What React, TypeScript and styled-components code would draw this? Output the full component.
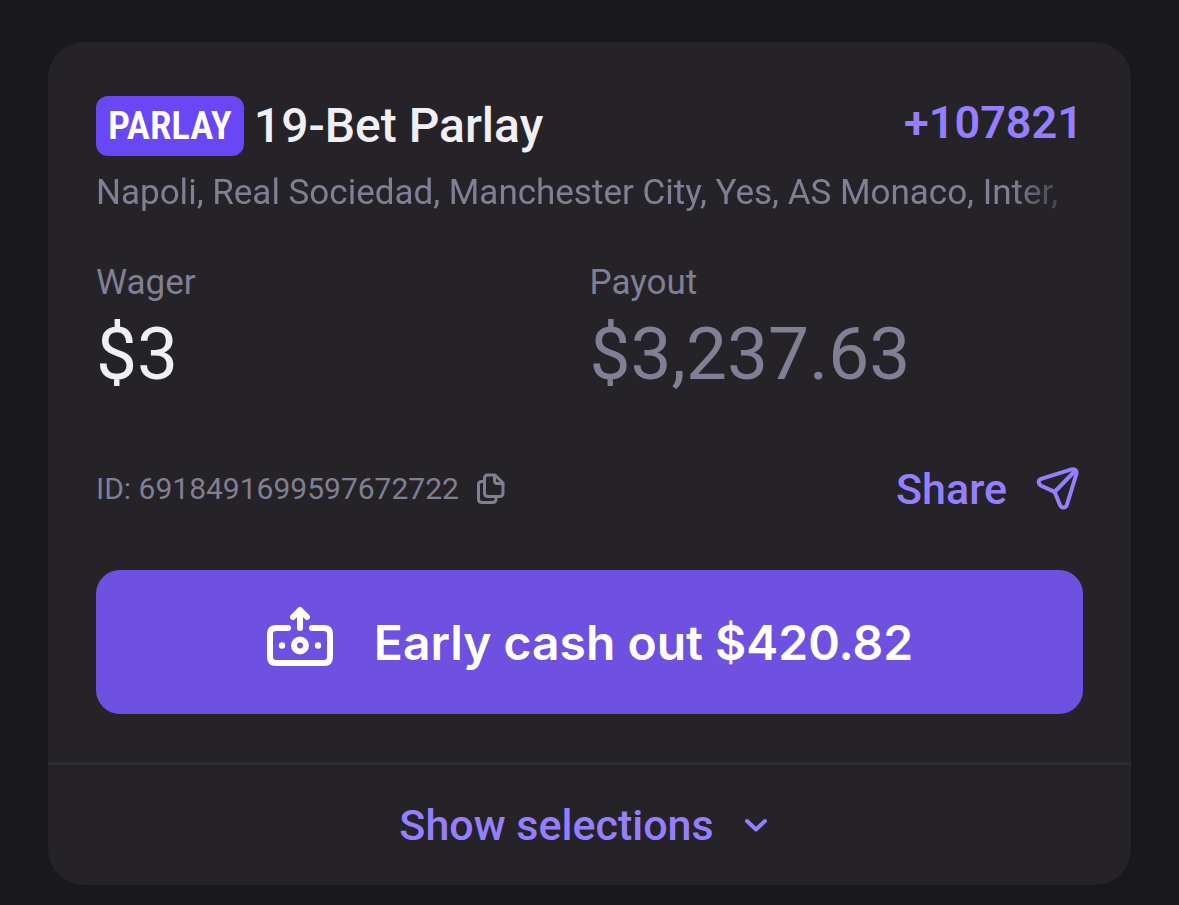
import React from "react";
import styled, { createGlobalStyle } from "styled-components";

const color = {
  page: "#19191b",
  card: "#252328",
  line: "#2e2d32",
  text: "#f0eff4",
  muted: "#817f93",
  accent: "#957fff",
  badge: "#6947f3",
  button: "#6e51e1",
};

const GlobalStyle = createGlobalStyle`
  * { box-sizing: border-box; }
  body {
    margin: 0;
    background: ${color.page};
    font-family: Roboto, "Liberation Sans", sans-serif;
  }
  button { font: inherit; cursor: pointer; }
`;

const Page = styled.main`
  padding: 42px 48px 20px;
`;

const Card = styled.article`
  border-radius: 36px;
  background: ${color.card};
  overflow: hidden;
`;

const Body = styled.div`
  padding: 54px 48px 48px;
`;

const Header = styled.header`
  display: flex;
  justify-content: space-between;
  align-items: flex-start;
`;

const Heading = styled.div`
  display: flex;
  align-items: center;
  gap: 10px;
`;

const Badge = styled.span`
  padding: 0 12px;
  border-radius: 12px;
  background: ${color.badge};
  color: #fff;
  font: 600 39px/60px "Roboto Condensed", "Open Sans Condensed", "Noto Sans Condensed", "Arial Narrow", Roboto, sans-serif;
`;

const Title = styled.h1`
  margin: 0;
  color: ${color.text};
  font-size: 48px;
  font-weight: 500;
  line-height: 60px;
`;

const Odds = styled.span`
  color: ${color.accent};
  font-size: 45px;
  font-weight: 600;
  line-height: 54px;
`;

const Teams = styled.p`
  margin: 12px 0 0;
  color: ${color.muted};
  font-size: 35px;
  line-height: 50px;
  white-space: nowrap;
  overflow: hidden;
  mask-image: linear-gradient(to right, #000 calc(100% - 72px), transparent);
`;

const Amounts = styled.dl`
  display: grid;
  grid-template-columns: 1fr 1fr;
  margin: 40px 0 0;
`;

const Label = styled.dt`
  color: ${color.muted};
  font-size: 35px;
  line-height: 50px;
`;

const Amount = styled.dd<{ $muted?: boolean }>`
  margin: 0;
  color: ${(p) => (p.$muted ? color.muted : color.text)};
  font-size: 73px;
  line-height: 92px;
`;

const Meta = styled.div`
  display: flex;
  justify-content: space-between;
  align-items: center;
  margin-top: 59px;
`;

const BetId = styled.div`
  display: flex;
  align-items: center;
  gap: 17px;
  color: ${color.muted};
  font-size: 30px;
  line-height: 36px;
`;

const TextButton = styled.button<{ $gap: number }>`
  display: flex;
  align-items: center;
  justify-content: center;
  gap: ${(p) => p.$gap}px;
  padding: 0;
  border: 0;
  background: none;
  color: ${color.accent};
  && {
    font-size: 43px;
    font-weight: 500;
    line-height: 60px;
  }
`;

const IconButton = styled.button`
  display: flex;
  padding: 0;
  border: 0;
  background: none;
  color: inherit;
`;

const CashOut = styled.button`
  display: flex;
  align-items: center;
  justify-content: center;
  gap: 40px;
  width: 100%;
  height: 144px;
  margin-top: 51px;
  border: 0;
  border-radius: 24px;
  background: ${color.button};
  color: #fff;
  && {
    font-family: Inter, Roboto, sans-serif;
    font-size: 48px;
    font-weight: 600;
  }
`;

const Footer = styled.footer`
  border-top: 3px solid ${color.line};
  padding: 30px 48px;
  display: flex;
  justify-content: center;
`;

const CopyIcon = () => (
  <svg width="30" height="32" viewBox="0 0 30 32" fill="none" stroke="currentColor" strokeWidth="3" strokeLinejoin="round" strokeLinecap="round" aria-hidden="true">
    <path d="M12 2H19L27 10V20Q27 23.500 23.500 23.500H12Q8.500 23.500 8.500 20V5.500Q8.500 2 12 2Z" />
    <path d="M18.500 2.500V7.500Q18.500 10.500 21.500 10.500H26.500" />
    <path d="M8 8.500H5.500Q2.500 8.500 2.500 11.500V26Q2.500 29.500 6 29.500H16.500Q20 29.500 20 26V24" />
  </svg>
);

const SendIcon = () => (
  <svg width="48" height="48" viewBox="0 0 48 48" fill="none" stroke="currentColor" strokeWidth="4" strokeLinejoin="round" strokeLinecap="round" aria-hidden="true">
    <path d="M6.200 13.800L36.500 4.400C40 3.400 42.300 5.700 41.300 9.200L32 39.500C30.800 43.500 26.500 43.500 25 40L20.500 29C20 27.500 19.300 26.500 17.500 25.800L6.700 21C3 19.200 2.700 15.100 6.200 13.800Z" />
    <path d="M19.500 27L39 7" />
  </svg>
);

const CashIcon = () => (
  <svg width="68" height="80" viewBox="0 0 68 80" fill="none" stroke="currentColor" strokeWidth="6" strokeLinejoin="round" strokeLinecap="round" aria-hidden="true">
    <path d="M22 26H10Q4 26 4 32V55Q4 61 10 61H58Q64 61 64 55V32Q64 26 58 26H46" />
    <path d="M34 26V8M27 15L34 8L41 15" />
    <circle cx="34" cy="43.500" r="6" />
    <circle cx="16" cy="43.500" r="3.200" fill="currentColor" stroke="none" />
    <circle cx="52" cy="43.500" r="3.200" fill="currentColor" stroke="none" />
  </svg>
);

const ChevronIcon = () => (
  <svg width="36" height="24" viewBox="0 0 36 24" fill="none" stroke="currentColor" strokeWidth="4" strokeLinejoin="round" strokeLinecap="round" aria-hidden="true">
    <path d="M3 8L12 16.500L21 8" />
  </svg>
);

export default function App() {
  return (
    <>
      <GlobalStyle />
      <Page>
        <Card>
          <Body>
            <Header>
              <Heading>
                <Badge>PARLAY</Badge>
                <Title>19-Bet Parlay</Title>
              </Heading>
              <Odds>+107821</Odds>
            </Header>
            <Teams>Napoli, Real Sociedad, Manchester City, Yes, AS Monaco, Inter,</Teams>
            <Amounts>
              <div>
                <Label>Wager</Label>
                <Amount>$3</Amount>
              </div>
              <div>
                <Label>Payout</Label>
                <Amount $muted>$3,237.63</Amount>
              </div>
            </Amounts>
            <Meta>
              <BetId>
                <span>ID: 6918491699597672722</span>
                <IconButton type="button" aria-label="Copy bet ID">
                  <CopyIcon />
                </IconButton>
              </BetId>
              <TextButton type="button" $gap={28}>
                Share
                <SendIcon />
              </TextButton>
            </Meta>
            <CashOut type="button">
              <CashIcon />
              Early cash out $420.82
            </CashOut>
          </Body>
          <Footer>
            <TextButton type="button" $gap={30}>
              Show selections
              <ChevronIcon />
            </TextButton>
          </Footer>
        </Card>
      </Page>
    </>
  );
}
